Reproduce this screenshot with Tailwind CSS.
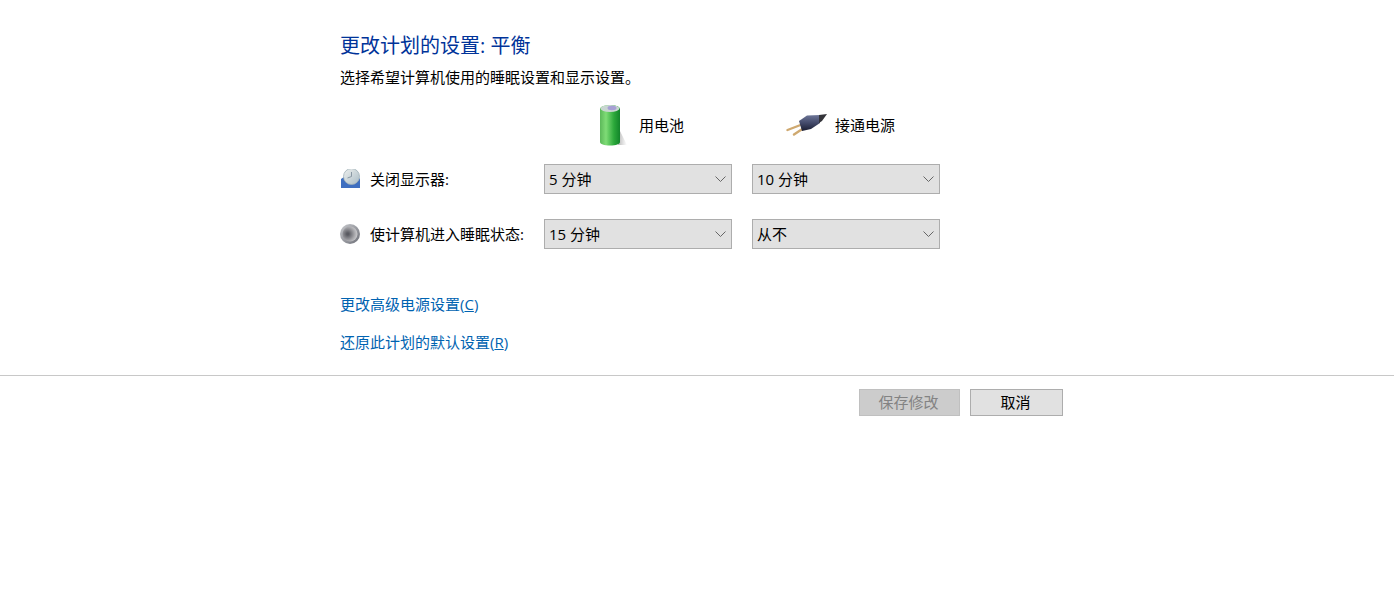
<!DOCTYPE html>
<html lang="zh-CN">
<head>
    <meta charset="UTF-8">
    <title>更改计划的设置</title>
    <script src="https://cdn.jsdelivr.net/npm/@tailwindcss/browser@4"></script>
</head>
<body class="bg-white text-[15px] leading-[20px] text-black font-['Open_Sans','Noto_Sans_CJK_SC',sans-serif]">
    <div class="h-[375px] pl-[340px] pt-[33px]">
        <h1 class="text-[20px] leading-[26px] font-normal text-[#003399]">更改计划的设置: 平衡</h1>
        <p class="mt-[8px]">选择希望计算机使用的睡眠设置和显示设置。</p>

        <!-- Column headers -->
        <div class="mt-[16px] flex h-[44px] items-center">
            <div class="ml-[258px] flex w-[188px] items-center">
                <svg class="h-[44px] w-[30px]" viewBox="0 0 30 44">
                    <defs>
                        <linearGradient id="batBody" x1="0" x2="1" y1="0" y2="0">
                            <stop offset="0" stop-color="#5cb85a"/>
                            <stop offset="0.3" stop-color="#7fdc76"/>
                            <stop offset="0.7" stop-color="#2ba83a"/>
                            <stop offset="1" stop-color="#12842a"/>
                        </linearGradient>
                        <linearGradient id="batShade" x1="0" x2="1" y1="0" y2="0">
                            <stop offset="0" stop-color="#888" stop-opacity="0.6"/>
                            <stop offset="1" stop-color="#999" stop-opacity="0"/>
                        </linearGradient>
                    </defs>
                    <path d="M22 28l7 14H20z" fill="url(#batShade)"/>
                    <path d="M2 6c0-2 4-4 10-4s10 2 10 4v33c0 2-4 3.500-10 3.500S2 41 2 39z" fill="url(#batBody)"/>
                    <ellipse cx="12" cy="5.500" rx="9.500" ry="3.500" fill="#c9d6d2"/>
                    <ellipse cx="14" cy="5" rx="4.500" ry="2.200" fill="#a7a0d4"/>
                </svg>
                <span class="ml-[11px]">用电池</span>
            </div>
            <div class="flex items-center">
                <svg class="h-[28px] w-[42px]" viewBox="0 0 42 28">
                    <defs>
                        <linearGradient id="plugBody" x1="0" x2="0" y1="0" y2="1">
                            <stop offset="0" stop-color="#6d7698"/>
                            <stop offset="0.5" stop-color="#434a6a"/>
                            <stop offset="1" stop-color="#1a1e32"/>
                        </linearGradient>
                    </defs>
                    <path d="M1.500 19l13-5M8 23.500l9-6" stroke="#cfa970" stroke-width="2.400" stroke-linecap="round" fill="none"/>
                    <path d="M13 10l8-5.500 13-.500v8L25 18l-9 2z" fill="url(#plugBody)"/>
                    <path d="M33 4l8-1-5 7-3 2z" fill="#34343a"/>
                </svg>
                <span class="ml-[7px]">接通电源</span>
            </div>
        </div>

        <!-- Sleep and display settings -->
        <div class="mt-[17px] grid grid-cols-[184px_188px_188px] gap-x-[20px] gap-y-[25px]">
            <div class="flex items-center">
                <svg class="h-[20px] w-[20px] shrink-0" viewBox="0 0 20 20">
                    <defs>
                        <linearGradient id="clockFace" x1="0" x2="1" y1="0" y2="1">
                            <stop offset="0" stop-color="#eef0ee"/>
                            <stop offset="1" stop-color="#aabcc6"/>
                        </linearGradient>
                    </defs>
                    <path d="M1 10l3-2h14l2 2v9H1z" fill="#3f6fc0"/>
                    <circle cx="11.500" cy="7.500" r="8" fill="url(#clockFace)" stroke="#9fb0b8" stroke-width="0.800"/>
                    <path d="M11.500 3V7.500l-4 1.500" stroke="#8a98a4" fill="none"/>
                </svg>
                <span class="ml-[10px] whitespace-nowrap">关闭显示器:</span>
            </div>
            <div class="flex h-[30px] items-center justify-between border border-[#adadad] bg-[#e1e1e1] pl-[4px] pr-[5px]">
                <span>5 分钟</span>
                <svg class="h-[6px] w-[11px]" viewBox="0 0 11 6"><path d="M.5.500l5 5 5-5" fill="none" stroke="#666"/></svg>
            </div>
            <div class="flex h-[30px] items-center justify-between border border-[#adadad] bg-[#e1e1e1] pl-[4px] pr-[5px]">
                <span>10 分钟</span>
                <svg class="h-[6px] w-[11px]" viewBox="0 0 11 6"><path d="M.5.500l5 5 5-5" fill="none" stroke="#666"/></svg>
            </div>
            <div class="flex items-center">
                <svg class="h-[20px] w-[20px] shrink-0" viewBox="0 0 20 20">
                    <defs>
                        <linearGradient id="moonRing" x1="0" x2="1" y1="0" y2="1">
                            <stop offset="0" stop-color="#c8cace"/>
                            <stop offset="1" stop-color="#6c6e76"/>
                        </linearGradient>
                        <radialGradient id="moonFace" cx="0.35" cy="0.5" r="0.7">
                            <stop offset="0.1" stop-color="#5a5b62"/>
                            <stop offset="0.65" stop-color="#a8a8ac"/>
                            <stop offset="1" stop-color="#d4d4d6"/>
                        </radialGradient>
                    </defs>
                    <circle cx="10" cy="10" r="10" fill="url(#moonRing)"/>
                    <circle cx="10" cy="10" r="7.500" fill="url(#moonFace)"/>
                </svg>
                <span class="ml-[10px] whitespace-nowrap">使计算机进入睡眠状态:</span>
            </div>
            <div class="flex h-[30px] items-center justify-between border border-[#adadad] bg-[#e1e1e1] pl-[4px] pr-[5px]">
                <span>15 分钟</span>
                <svg class="h-[6px] w-[11px]" viewBox="0 0 11 6"><path d="M.5.500l5 5 5-5" fill="none" stroke="#666"/></svg>
            </div>
            <div class="flex h-[30px] items-center justify-between border border-[#adadad] bg-[#e1e1e1] pl-[4px] pr-[5px]">
                <span>从不</span>
                <svg class="h-[6px] w-[11px]" viewBox="0 0 11 6"><path d="M.5.500l5 5 5-5" fill="none" stroke="#666"/></svg>
            </div>
        </div>

        <div class="mt-[45px] flex flex-col gap-y-[18px] text-[#0063b1]">
            <a href="#">更改高级电源设置(<span class="underline">C</span>)</a>
            <a href="#">还原此计划的默认设置(<span class="underline">R</span>)</a>
        </div>
    </div>

    <!-- Footer buttons -->
    <div class="flex h-[60px] justify-end gap-x-[10px] border-t border-[#c8c8c8] pr-[331px] pt-[13px]">
        <button class="h-[27px] w-[101px] border border-[#c0c0c0] bg-[#cccccc] pb-[2px] pr-[2px] text-[#838383]">保存修改</button>
        <button class="h-[27px] w-[93px] border border-[#adadad] bg-[#e1e1e1] pb-[2px] pr-[2px]">取消</button>
    </div>
</body>
</html>
